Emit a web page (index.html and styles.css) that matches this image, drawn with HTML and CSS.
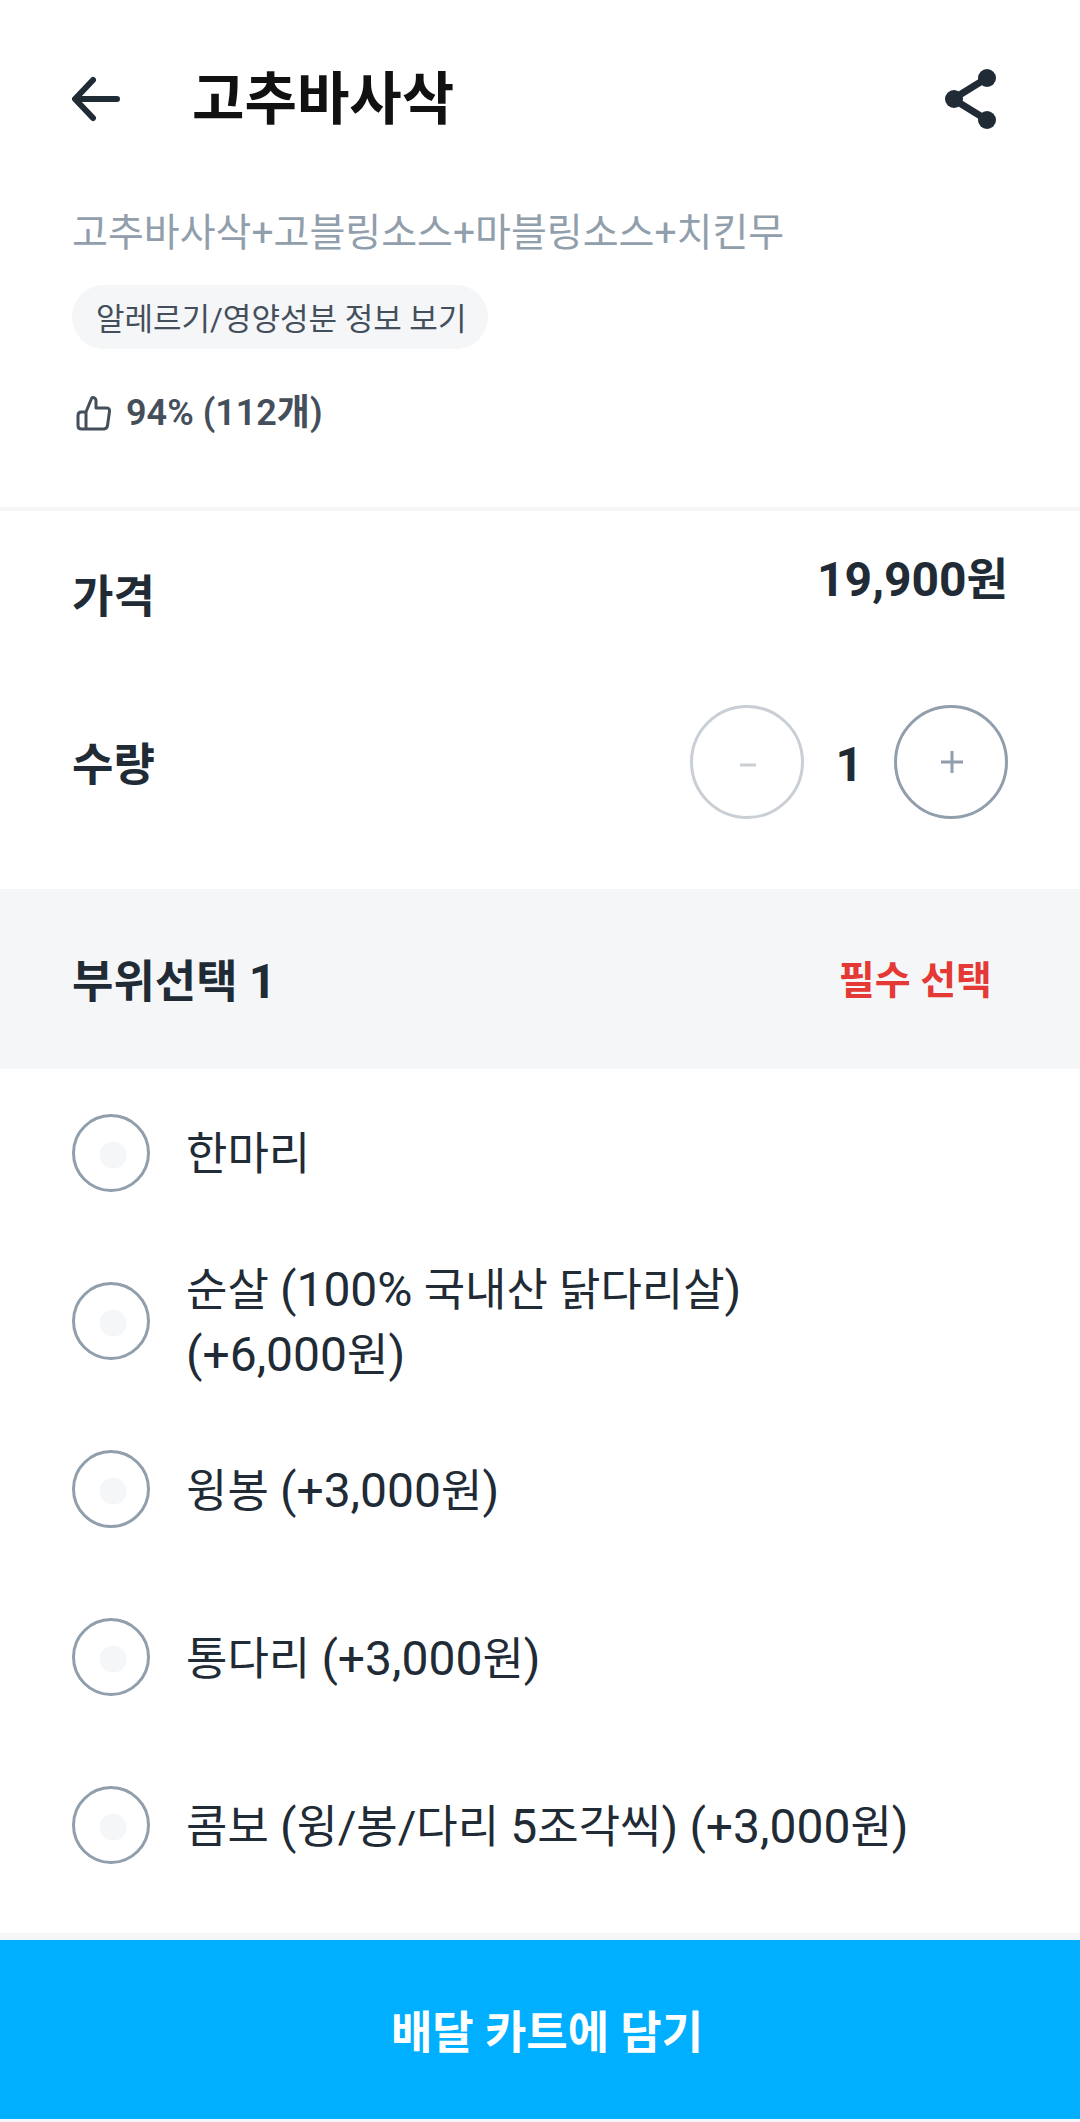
FILE: index.html
```html
<!DOCTYPE html>
<html lang="ko">
<head>
  <meta charset="UTF-8">
  <meta name="viewport" content="width=device-width, initial-scale=1.0">
  <title>고추바사삭</title>
  <link rel="stylesheet" href="styles.css">
</head>

<body>
  <header class="top-bar">
    <button class="icon-button" type="button" aria-label="뒤로">
      <svg width="48" height="48" viewBox="0 0 48 48" fill="none" stroke="#212b36" stroke-width="6" stroke-linecap="round" stroke-linejoin="round">
        <path d="M45 24H4M21 5L3 24L21 43"/>
      </svg>
    </button>
    <h1>고추바사삭</h1>
    <button class="icon-button" type="button" aria-label="공유">
      <svg width="52" height="60" viewBox="0 0 52 60" fill="#212b36">
        <path d="M43 9L9 30L43 51" fill="none" stroke="#212b36" stroke-width="7"/>
        <circle cx="43" cy="9" r="9"/>
        <circle cx="10" cy="30" r="9"/>
        <circle cx="43" cy="51" r="9"/>
      </svg>
    </button>
  </header>

  <main>
    <section class="menu-info">
      <p class="description">고추바사삭+고블링소스+마블링소스+치킨무</p>
      <button class="chip" type="button">알레르기/영양성분 정보 보기</button>
      <p class="rating">
        <svg width="36" height="36" viewBox="0 0 36 36" fill="none" stroke="#454f5b" stroke-width="3" stroke-linejoin="round">
          <path d="M10 17L15.500 3.500C16 2 20 2 20 6V13H30.500Q34 13 33.500 16.500L31.500 30.500Q31 34 27.500 34H5.500Q2 34 2 30.500V20.500Q2 17 5.500 17H10V34"/>
        </svg>
        <span>94% (112개)</span>
      </p>
    </section>

    <section class="order">
      <div class="row">
        <h2>가격</h2>
        <p class="price"><span class="num">19,900</span>원</p>
      </div>
      <div class="row">
        <h2>수량</h2>
        <div class="quantity">
          <button class="step" id="minus" type="button" aria-label="수량 줄이기" disabled>
            <svg width="24" height="24" viewBox="0 0 24 24" stroke="currentColor" stroke-width="3"><path d="M5 15H21"/></svg>
          </button>
          <output class="num" id="count">1</output>
          <button class="step" id="plus" type="button" aria-label="수량 늘리기">
            <svg width="24" height="24" viewBox="0 0 24 24" stroke="currentColor" stroke-width="3"><path d="M2 12H24M13 1V23"/></svg>
          </button>
        </div>
      </div>
    </section>

    <section>
      <div class="option-header">
        <h2>부위선택 <span class="num">1</span></h2>
        <span class="required">필수 선택</span>
      </div>
      <div class="options">
        <label class="option">
          <input type="radio" name="part">
          <span class="option-name">한마리</span>
        </label>
        <label class="option">
          <input type="radio" name="part">
          <span class="option-name">순살 <span class="num">(100%</span> 국내산 닭다리살<span class="num">)</span><br><span class="num">(+6,000</span>원<span class="num">)</span></span>
        </label>
        <label class="option">
          <input type="radio" name="part">
          <span class="option-name">윙봉 <span class="num">(+3,000</span>원<span class="num">)</span></span>
        </label>
        <label class="option">
          <input type="radio" name="part">
          <span class="option-name">통다리 <span class="num">(+3,000</span>원<span class="num">)</span></span>
        </label>
        <label class="option">
          <input type="radio" name="part">
          <span class="option-name">콤보 <span class="num">(</span>윙/봉/다리 <span class="num">5</span>조각씩<span class="num">)</span> <span class="num">(+3,000</span>원<span class="num">)</span></span>
        </label>
      </div>
    </section>
  </main>

  <footer class="cart-bar">
    <button class="cart-button" type="button">배달 카트에 담기</button>
  </footer>

  <script>
    const count = document.getElementById("count");
    const minus = document.getElementById("minus");
    const plus = document.getElementById("plus");

    function changeCount(step) {
      const next = Number(count.textContent) + step;
      count.textContent = next;
      minus.disabled = next <= 1;
    }

    minus.addEventListener("click", () => changeCount(-1));
    plus.addEventListener("click", () => changeCount(1));
  </script>
</body>
</html>
```
FILE: styles.css
```css
* {
  box-sizing: border-box;
}

body {
  margin: 0;
  background: #fff;
  color: #212b36;
  font-family: Roboto, "Noto Sans CJK KR", sans-serif;
  font-size: 45px;
  line-height: 64px;
}

h1, h2, p {
  margin: 0;
}

h2 {
  padding-top: 6px;
  font-size: 45px;
  font-weight: 700;
}

button {
  padding: 0;
  border: none;
  font-family: inherit;
  cursor: pointer;
}

svg {
  display: block;
}

/* numbers and brackets run a little larger than the hangul */
.num {
  font-size: 48px;
}

.top-bar {
  display: flex;
  align-items: center;
  padding: 59px 84px 0 72px;
}

.top-bar h1 {
  flex: 1;
  margin-left: 72px;
  padding-top: 2px;
  color: #111;
  font-size: 57px;
  font-weight: 700;
  line-height: 78px;
}

.icon-button {
  background: none;
}

.menu-info {
  padding: 64px 72px 62px;
  border-bottom: 4px solid #f4f6f8;
}

.description {
  color: #919eab;
  font-size: 39px;
  line-height: 60px;
}

.chip {
  display: block;
  height: 64px;
  margin-top: 22px;
  padding: 0 22px 2px 24px;
  border-radius: 32px;
  background: #f4f6f8;
  color: #454f5b;
  font-size: 31px;
}

.rating {
  display: flex;
  align-items: center;
  gap: 14px;
  margin-top: 32px;
  padding-left: 4px;
  color: #454f5b;
  font-size: 36px;
  font-weight: 600;
}

.order {
  padding-bottom: 42px;
}

.row {
  display: flex;
  justify-content: space-between;
  align-items: center;
  height: 168px;
  padding: 0 72px;
}

.price {
  padding-bottom: 30px;
  font-weight: 700;
}

.quantity {
  display: flex;
  align-items: center;
  gap: 31px;
  padding-bottom: 2px;
  font-weight: 700;
}

.quantity .num {
  padding-top: 6px;
}

.step {
  display: flex;
  justify-content: center;
  align-items: center;
  width: 114px;
  height: 114px;
  border: 3px solid #919eab;
  border-radius: 50%;
  background: none;
  color: #919eab;
}

.step:disabled {
  border-color: #c9cfd5;
  color: #c9cfd5;
}

.option-header {
  display: flex;
  justify-content: space-between;
  align-items: center;
  height: 180px;
  padding: 0 88px 0 72px;
  background: #f4f6f8;
}

.required {
  padding-top: 4px;
  color: #e53935;
  font-size: 39px;
  font-weight: 700;
}

.options {
  padding-bottom: 24px;
}

.option {
  display: flex;
  align-items: center;
  gap: 36px;
  min-height: 168px;
  padding: 0 72px;
}

.option-name {
  padding-top: 4px;
}

.option input {
  flex: none;
  appearance: none;
  width: 78px;
  height: 78px;
  margin: 0;
  border: 3px solid #919eab;
  border-radius: 50%;
  background: radial-gradient(circle at 38px 38px, #f4f6f8 13px, transparent 14px);
}

.option input:checked {
  border-color: #00afff;
  background: radial-gradient(circle at 38px 38px, #00afff 13px, transparent 14px);
}

.cart-bar {
  padding: 7px 0 3px;
  background: #f4f6f8;
}

.cart-button {
  display: block;
  width: 100%;
  height: 179px;
  padding-left: 14px;
  background: #00afff;
  color: #fff;
  font-size: 45px;
  font-weight: 700;
}
```
